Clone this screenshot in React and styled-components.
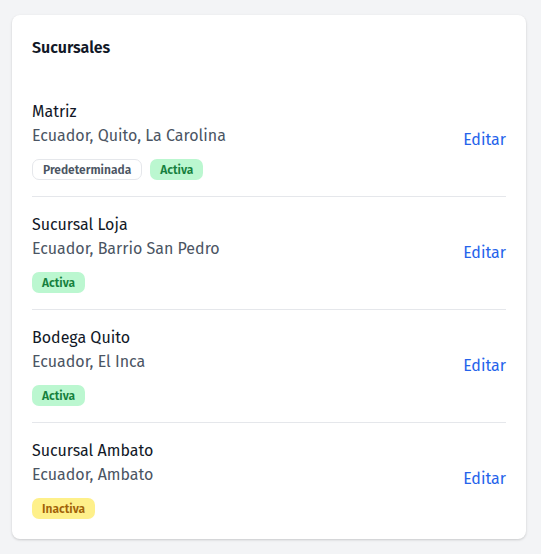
import React from "react";
import styled, { createGlobalStyle } from "styled-components";

const GlobalStyle = createGlobalStyle`
  html, body {
    margin: 0;
    background: #f3f4f6;
  }
  body {
    font-family: "Fira Sans", "Lato", "Liberation Sans", sans-serif;
    color: #111827;
  }
`;

const Page = styled.div`
  padding: 15px 15px 15px 12px;
`;

const Card = styled.section`
  background: #ffffff;
  border-radius: 8px;
  box-shadow: 0 1px 3px rgba(0, 0, 0, 0.12), 0 1px 2px rgba(0, 0, 0, 0.06);
  padding: 21px 20px 4px 20px;
`;

const Title = styled.h2`
  margin: 0 0 24px 0;
  font-size: 16px;
  line-height: 24px;
  font-weight: 600;
  color: #111827;
`;

const List = styled.ul`
  list-style: none;
  margin: 0;
  padding: 0;
`;

const Row = styled.li`
  display: flex;
  align-items: center;
  justify-content: space-between;
  padding: 16px 0;
  border-top: ${(p) => (p.$first ? "none" : "1px solid #e5e7eb")};
`;

const Info = styled.div`
  display: flex;
  flex-direction: column;
`;

const Name = styled.div`
  font-size: 16px;
  line-height: 24px;
  color: #111827;
`;

const Address = styled.div`
  font-size: 16px;
  line-height: 24px;
  color: #4b5563;
`;

const Badges = styled.div`
  display: flex;
  gap: 8px;
  margin-top: 11px;
`;

const tones = {
  outline: { bg: "#ffffff", fg: "#4b5563", border: "1px solid #e5e7eb" },
  green: { bg: "#bbf7d0", fg: "#15803d", border: "none" },
  yellow: { bg: "#fef08a", fg: "#a16207", border: "none" },
};

const Badge = styled.span`
  box-sizing: border-box;
  display: inline-flex;
  align-items: center;
  height: 21px;
  padding: 0 10px;
  border-radius: 7px;
  font-size: 12px;
  font-weight: 600;
  background: ${(p) => tones[p.$tone].bg};
  color: ${(p) => tones[p.$tone].fg};
  border: ${(p) => tones[p.$tone].border};
`;

const EditLink = styled.a`
  font-size: 16px;
  line-height: 24px;
  color: #2563eb;
  text-decoration: none;
  cursor: pointer;
`;

const branches = [
  {
    name: "Matriz",
    address: "Ecuador, Quito, La Carolina",
    badges: [
      { label: "Predeterminada", tone: "outline" },
      { label: "Activa", tone: "green" },
    ],
  },
  {
    name: "Sucursal Loja",
    address: "Ecuador, Barrio San Pedro",
    badges: [{ label: "Activa", tone: "green" }],
  },
  {
    name: "Bodega Quito",
    address: "Ecuador, El Inca",
    badges: [{ label: "Activa", tone: "green" }],
  },
  {
    name: "Sucursal Ambato",
    address: "Ecuador, Ambato",
    badges: [{ label: "Inactiva", tone: "yellow" }],
  },
];

export default function App() {
  return (
    <Page>
      <GlobalStyle />
      <Card>
        <Title>Sucursales</Title>
        <List>
          {branches.map((b, i) => (
            <Row key={b.name} $first={i === 0}>
              <Info>
                <Name>{b.name}</Name>
                <Address>{b.address}</Address>
                <Badges>
                  {b.badges.map((bd) => (
                    <Badge key={bd.label} $tone={bd.tone}>
                      {bd.label}
                    </Badge>
                  ))}
                </Badges>
              </Info>
              <EditLink>Editar</EditLink>
            </Row>
          ))}
        </List>
      </Card>
    </Page>
  );
}
